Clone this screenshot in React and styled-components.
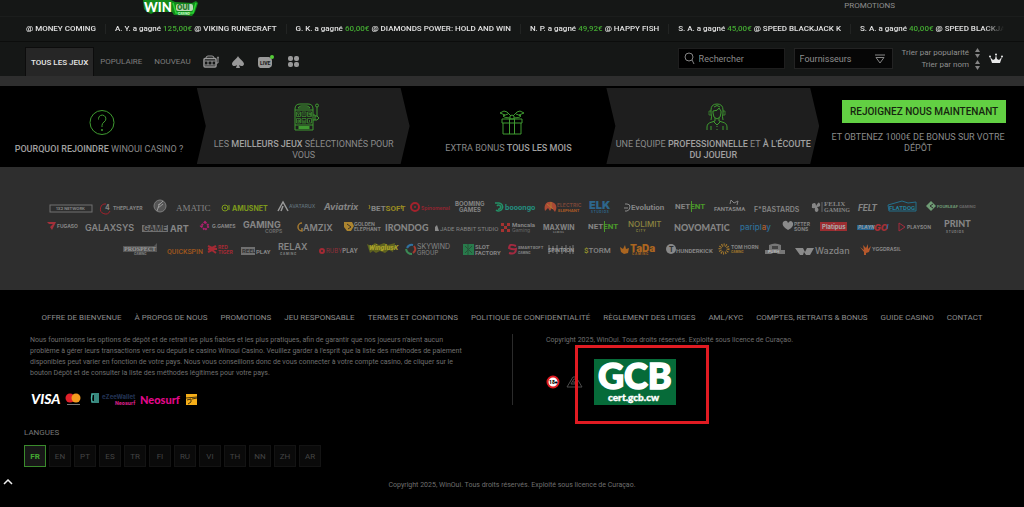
import React, { Fragment } from 'react'
import styled, { createGlobalStyle } from 'styled-components'

const GlobalStyle = createGlobalStyle`
  * {
    box-sizing: border-box;
  }

  body {
    margin: 0;
    background: #000;
    color: #8f8f8f;
    font-family: Roboto, 'Liberation Sans', sans-serif;
    font-size: 8px;
  }

  a {
    color: inherit;
    text-decoration: none;
  }

  button, input, select {
    font-family: inherit;
  }
`

const Header = styled.header`
  background: #151716;
`

const TopBar = styled.div`
  display: flex;
  justify-content: space-between;
  height: 17px;
  padding: 0 129px 0 142px;
  line-height: 12px;
  border-bottom: 1px solid #1b1d1c;
`

const Ticker = styled.div`
  display: flex;
  align-items: center;
  height: 24px;
  margin: 0 20px 0 17px;
  overflow: hidden;
  -webkit-mask-image: linear-gradient(90deg, transparent 0, #000 10px, #000 calc(100% - 20px), transparent 100%);
  mask-image: linear-gradient(90deg, transparent 0, #000 10px, #000 calc(100% - 20px), transparent 100%);
`

const Win = styled.span`
  flex: none;
  padding: 0 9px;
  color: #e2e2e2;
  font-size: 8px;
  font-weight: 500;
  line-height: 10px;
  white-space: nowrap;

  & + & {
    border-left: 1px solid #222423;
  }
`

const Amount = styled.span`
  color: #43a832;
`

const NavBar = styled.nav`
  display: flex;
  align-items: flex-end;
  height: 35px;
  padding: 0 21px 0 25px;
  border-top: 1px solid #0c0d0c;
`

const Tab = styled.a`
  display: flex;
  align-items: center;
  height: 29px;
  padding: 0 ${props => (props.$active ? '5px' : '6px')};
  color: ${props => (props.$active ? '#e8e8e8' : '#7d7d7d')};
  background: ${props => (props.$active ? '#262626' : 'transparent')};
  border: ${props => (props.$active ? '1px solid #0c0c0c' : '0')};
  border-bottom: 0;
  font-weight: ${props => (props.$active ? 500 : 400)};
`

const GameTypes = styled.div`
  display: flex;
  align-items: center;
  gap: 13px;
  height: 29px;
  padding-left: 6px;
`

const IconLink = styled.a`
  display: flex;
`

const Filters = styled.div`
  display: flex;
  align-items: center;
  gap: 9px;
  height: 35px;
  margin-left: auto;
`

const SearchBox = styled.label`
  display: flex;
  align-items: center;
  gap: 4px;
  width: 107px;
  height: 21px;
  padding: 0 5px;
  background: #000;
  border: 1px solid #1e1e1e;
`

const SearchInput = styled.input`
  width: 80px;
  padding: 0;
  color: #a5a5a5;
  background: transparent;
  border: 0;
  outline: 0;
  font-size: 9px;

  &::placeholder {
    color: #8a8a8a;
    opacity: 1;
  }
`

const SelectBox = styled.label`
  display: flex;
  align-items: center;
  width: 99px;
  height: 21px;
  padding: 0 7px 0 5px;
  background: #060606;
  border: 1px solid #232323;
`

const Select = styled.select`
  flex: 1;
  padding: 0;
  color: #8f8f8f;
  background: transparent;
  border: 0;
  appearance: none;
  font-size: 9px;
`

const SortList = styled.div`
  display: flex;
  flex-direction: column;
  align-items: flex-end;
  gap: 1px;
`

const SortButton = styled.button`
  display: flex;
  align-items: center;
  gap: 6px;
  height: 11px;
  padding: 0;
  color: #8f8f8f;
  background: none;
  border: 0;
  font-size: 8px;
  line-height: 11px;
`

const Strip = styled.div`
  height: 10px;
  background: #2e2e2e;
`

const Reasons = styled.section`
  display: grid;
  grid-template-columns: repeat(5, 1fr);
  padding: 2px 0 3px;
`

const Reason = styled.div`
  display: flex;
  flex-direction: column;
  align-items: center;
  justify-content: center;
  gap: 8px;
  height: 76px;
  margin-left: ${props => (props.$raised ? '-8px' : '0')};
  padding: 12px 0 0 ${props => (props.$raised ? '8px' : '0')};
  background: ${props => (props.$raised ? '#1e1e1e' : 'transparent')};
  clip-path: ${props => (props.$raised
    ? 'polygon(0 0, calc(100% - 9px) 0, 100% 50%, calc(100% - 9px) 100%, 0 100%, 9px 50%)'
    : 'none')};
`

const ReasonText = styled.p`
  margin: 0 7px 0 0;
  color: #8a8a8a;
  font-size: 9px;
  line-height: 11px;
  text-align: center;

  b {
    color: #a0a0a0;
    font-weight: 500;
  }
`

const Join = styled.div`
  display: flex;
  flex-direction: column;
  align-items: center;
  gap: 9px;
  padding: 12px 8px 0;
`

const JoinButton = styled.button`
  height: 23px;
  margin-left: 5px;
  padding: 0 8px;
  color: #16250f;
  background: #62d043;
  border: 0;
  font-size: 10px;
  font-weight: 500;
  white-space: nowrap;
`

const Providers = styled.section`
  display: flex;
  flex-direction: column;
  align-items: center;
  gap: 1px;
  padding: 31px 40px 30px;
  background: #2e2e2e;
`

const ProviderRow = styled.div`
  display: flex;
  flex-wrap: wrap;
  justify-content: center;
  gap: 9px;
  row-gap: 0;
`

const LogoSvg = styled.svg`
  display: block;
  flex: none;
  overflow: visible;
`

const Footer = styled.footer`
  padding: 22px 24px 14px;
`

const FooterLinks = styled.nav`
  display: flex;
  flex-wrap: wrap;
  justify-content: center;
  gap: 13px;
  color: #8c8c8c;
  font-size: 8px;
  line-height: 12px;
`

const Columns = styled.div`
  display: grid;
  grid-template-columns: 1fr 1fr;
  margin-top: 10px;
`

const Column = styled.div`
  padding: 1px 40px 0 ${props => (props.$divided ? '33px' : '6px')};
  border-left: ${props => (props.$divided ? '1px solid #2b2b2b' : '0')};
`

const Copy = styled.p`
  margin: 0;
  color: #6f6f6f;
  font-size: 7px;
  line-height: 11px;
  text-align: ${props => (props.$center ? 'center' : 'left')};
`

const Payments = styled.div`
  display: flex;
  align-items: center;
  margin-top: 14px;
`

const Badges = styled.div`
  display: flex;
  align-items: center;
  gap: 6px;
  margin-top: 13px;
`

const BadgeSvg = styled.svg`
  display: block;
  overflow: visible;
`

const Certificate = styled.a`
  position: relative;
  display: block;
  margin-left: 6px;

  &::after {
    content: '';
    position: absolute;
    inset: -14px -33px -19px -19px;
    border: 3px solid #e01b22;
  }
`

const Languages = styled.div`
  display: flex;
  flex-wrap: wrap;
  gap: 3px;
  margin: 6px 0 13px;
`

const LanguagesTitle = styled.h4`
  margin: 22px 0 0;
  color: #777;
  font-size: 8px;
  font-weight: 400;
  line-height: 12px;
`

const Language = styled.button`
  width: 22px;
  height: 22px;
  padding: 0;
  color: ${props => (props.$active ? '#43a832' : '#444')};
  background: ${props => (props.$active ? '#171717' : '#0a0a0a')};
  border: 1px solid ${props => (props.$active ? '#3a8a2c' : '#131313')};
  font-size: 8px;
  font-weight: ${props => (props.$active ? 700 : 400)};
`

const ToTop = styled.button`
  position: fixed;
  bottom: 21px;
  left: 2px;
  display: flex;
  padding: 1px;
  background: none;
  border: 0;
`

const wins = [
  ['A. Y.', '125,00€', 'VIKING RUNECRAFT'],
  ['G. K.', '60,00€', 'DIAMONDS POWER: HOLD AND WIN'],
  ['N. P.', '49,92€', 'HAPPY FISH'],
  ['S. A.', '45,00€', 'SPEED BLACKJACK K'],
  ['S. A.', '40,00€', 'SPEED BLACKJACK K']
]

const footerLinks = [
  'OFFRE DE BIENVENUE',
  'À PROPOS DE NOUS',
  'PROMOTIONS',
  'JEU RESPONSABLE',
  'TERMES ET CONDITIONS',
  'POLITIQUE DE CONFIDENTIALITÉ',
  'RÈGLEMENT DES LITIGES',
  'AML/KYC',
  'COMPTES, RETRAITS & BONUS',
  'GUIDE CASINO',
  'CONTACT'
]

const languages = ['FR', 'EN', 'PT', 'ES', 'TR', 'FI', 'RU', 'VI', 'TH', 'NN', 'ZH', 'AR']

// one line of lettering inside a logo
const T = ({ x = 0, y = 13, s = 8, c = '#858585', f = 'Inter, sans-serif', w = 700, children }) => (
  <text x={x} y={y} fontSize={s} fill={c} fontFamily={f} fontWeight={w}>{children}</text>
)

const serif = 'Liberation Serif, serif'
const lato = 'Lato, sans-serif'
const roboto = 'Roboto, sans-serif'

const providerRows = [
  [
    [44, <Fragment><rect x='1' y='7' width='42' height='7' fill='none' stroke='#707070' /><T x={7} y={12} s={4}>1X2 NETWORK</T></Fragment>],
    [42, <Fragment><path d='M4 6A5 5 0 1 0 8 13' fill='none' stroke='#a3222c' /><T x={3} y={12} s={7}>4</T><T x={11} y={12} s={5}>THEPLAYER</T></Fragment>],
    [14, <Fragment><circle cx='7' cy='8' r='6' fill='#555' stroke='#7d7d7d' /><path d='M4 13Q5 6 10 3M5 10L10 6M5 7L8 5' stroke='#999' fill='none' /></Fragment>],
    [36, <T y={13} s={9} f={serif} w={400}>AMATIC</T>],
    [48, <Fragment><circle cx='4' cy='10' r='3' fill='none' stroke='#7d9a1c' /><circle cx='4' cy='10' r='1' fill='#7d9a1c' /><path d='M8 7V12' stroke='#7d9a1c' /><T x={11} y={13} s={7} c='#7d9a1c'>AMUSNET</T></Fragment>],
    [37, <Fragment><path d='M0 13L5 4L10 13M3 13L5 8' fill='none' stroke='#9a9a9a' strokeWidth='1.5' /><T x={11} y={10} s={5} c='#60707a' w={500}>AVATARUX</T></Fragment>],
    [36, <g fontStyle='italic'><T y={12} s={9}>Aviatrix</T></g>],
    [32, <Fragment><path d='M0 7L1 9L0 11M33 7L32 9L33 11' stroke='#9a8b22' fill='none' /><T x={2} y={13} s={8} f={roboto}>BET<tspan fill='#9a8b22'>SOFT</tspan></T></Fragment>],
    [36, <Fragment><circle cx='5' cy='9' r='4' fill='none' stroke='#a3222c' strokeWidth='2' /><circle cx='5' cy='9' r='1' fill='#a3222c' /><T x={11} y={12} s={5} c='#8d2530'>Spinomenal</T></Fragment>],
    [30, <Fragment><T y={8} s={6}>BOOMING</T><T x={4} y={14} s={6}>GAMES</T></Fragment>],
    [41, <Fragment><path d='M1 5H5A4 4 0 1 1 2 12M3 8A2 2 0 1 1 4 11' fill='none' stroke='#239066' strokeWidth='1.5' /><T x={11} y={12} s={7} c='#239080'>booongo</T></Fragment>],
    [36, <Fragment><path d='M1 13C-1 5 5 2 10 5C13 7 13 11 11 14L8 10L6 13L4 10Z' fill='#ab4a35' /><path d='M3 6L9 11M7 4V10' stroke='#b07830' /><T x={13} y={9} s={5} c='#7a4638'>ELECTRIC</T><T x={14} y={14} s={4} c='#ab5a25'>ELEPHANT</T></Fragment>],
    [26, <Fragment><T y={11} s={11} c='#2d668c' w={900}>ELK</T><T x={2} y={15} s={3} c='#2d668c'>S T U D I O S</T></Fragment>],
    [42, <Fragment><path d='M1 6H3Q6 6 6 9T3 13H1M0 10H4' fill='none' stroke='#8a8a8a' /><T x={7} y={12} s={8} f={roboto}>Evolution</T></Fragment>],
    [30, <Fragment><path d='M16.500 3V14' stroke='#4a9a2a' /><T y={11} s={8} f={roboto}>NET<tspan fill='#4a9a2a'>ENT</tspan></T></Fragment>],
    [31, <Fragment><path d='M16 6L17 2L20 5L24 3L23 7' fill='none' stroke='#858585' /><T y={13} s={6} f={roboto}>FANTASMA</T></Fragment>],
    [48, <T y={14} s={7} w={600}>F*BASTARDS</T>],
    [38, <Fragment><path d='M1 6Q5 3 5 8Q8 2 9 6Q10 9 6 9Q9 12 6 14Q3 14 4 10Q0 11 1 8Z' fill='#858585' /><path d='M11 4V14' stroke='#666' /><T x={13} y={8} s={7} f={serif}>FELIX</T><T x={13} y={14} s={6} f={serif}>GAMING</T></Fragment>],
    [21, <g fontStyle='italic'><T y={13} s={9} f={roboto}>FELT</T></g>],
    [29, <Fragment><path d='M0 7L14 3L20 5L28 4V13H1Z' fill='none' stroke='#23708c' /><T x={1} y={12} s={6} c='#23809c' f={roboto}>FLATDOG</T></Fragment>],
    [49, <Fragment><path d='M5 3L10 8L5 13L0 8Z' fill='#6f9c75' /><path d='M7 6L4 8L7 10' stroke='#2e2e2e' fill='none' /><T x={11} y={10} s={4} c='#6f9c75'>FOURLEAF <tspan fill='#686868'>GAMING</tspan></T></Fragment>]
  ],
  [
    [29, <Fragment><path d='M0 3H9L5 11L3 8L6 5H2Z' fill='#a3303a' /><T x={10} y={9} s={5}>FUGASO</T></Fragment>],
    [48, <T y={12} s={9} w={600}>GALAXSYS</T>],
    [49, <Fragment><rect y='6' width='26' height='7' fill='#707070' /><T x={1} y={12} s={8} c='#333'>GAME</T><T x={28} y={13} s={9}>ART</T></Fragment>],
    [34, <Fragment><path d='M5 3L9 7L5 11L1 7Z' fill='none' stroke='#b02070' strokeWidth='2' strokeDasharray='2 1' /><T x={12} y={9} s={5}>G.GAMES</T></Fragment>],
    [43, <Fragment><T y={9} s={9}>GAMING</T><T x={22} y={14} s={5} c='#686868'>CORPS</T></Fragment>],
    [40, <Fragment><path d='M7 4A4 4 0 1 0 7 12V9' fill='none' stroke='#a37830' strokeWidth='1.5' /><T x={8} y={12} s={9} w={600}>AMZIX</T></Fragment>],
    [32, <Fragment><path d='M0 3H8L10 7L7 12H3L0 8Z' fill='#ab842f' /><path d='M3 5L7 8L4 10' stroke='#3b3328' fill='none' /><T x={10} y={7} s={5}>GOLDEN</T><T x={10} y={12} s={5}>ELEPHANT</T></Fragment>],
    [41, <T y={12} s={9} f={lato} w={900}>IRONDOG</T>],
    [56, <Fragment><path d='M0 12V8L2 6L4 12Z' fill='#8a8a8a' /><T x={5} y={12} s={6} f={roboto} w={400}>JADE RABBIT STUDIO</T></Fragment>],
    [34, <Fragment><path d='M1 4H4V7H7V4H10V7H7V10H10V13H7V10H4V13H1V10H4V7H1Z' fill='#a53230' /><T x={12} y={8} s={6} f={roboto}>Mancala</T><T x={12} y={13} s={5} c='#686868' w={400}>Gaming</T></Fragment>],
    [36, <Fragment><T y={11} s={7}>MAXWIN</T><T x={10} y={14} s={2}>G A M I N G</T></Fragment>],
    [31, <Fragment><path d='M16.500 2V13' stroke='#4a9a2a' /><T y={10} s={8} f={roboto}>NET<tspan fill='#4a9a2a'>ENT</tspan></T></Fragment>],
    [37, <Fragment><T y={8} s={8} c='#8c8540' w={500}>NOLIMIT</T><T x={8} y={13} s={3} c='#8c8540'>C  I  T  Y</T></Fragment>],
    [57, <T y={12} s={9} f={lato} w={900}>NOVOMATIC</T>],
    [33, <T y={11} s={8} c='#2e6e98' w={500}>paripl<tspan fill='#b06030'>a</tspan>y</T>],
    [28, <Fragment><path d='M1 3Q5 0 6 4Q9 0 11 4Q12 8 6 11Q-1 7 1 3Z' fill='#8a8a8a' /><T x={12} y={7} s={5}>PETER</T><T x={12} y={12} s={5}>SONS</T></Fragment>],
    [29, <Fragment><rect x='1' y='3' width='27' height='9' fill='#9d2d31' /><T x={3} y={10} s={6} c='#aaa'>Platipus</T></Fragment>],
    [32, <g fontStyle='italic'><rect y='6' width='17' height='5' fill='#25628f' /><T x={1} y={10} s={5} c='#999'>PLAYN</T><T x={17} y={12} s={9} c='#a32f36' w={900}>GO</T><path d='M31 5L30 10' stroke='#286fa5' /></g>],
    [37, <Fragment><path d='M1 4L7 8L1 12Z' fill='none' stroke='#a32a3d' /><T x={9} y={10} s={5}>PLAYSON</T></Fragment>],
    [34, <Fragment><T y={8} s={9} f={lato} w={900}>PRINT</T><T x={2} y={14} s={3}>S T U D I O S</T></Fragment>]
  ],
  [
    [35, <Fragment><path d='M0 6H31L34 3V12H0Z' fill='#555' /><T x={1} y={11} s={6} c='#999' f={serif}>PROSPECT</T><T x={11} y={15} s={3}>GAMING</T></Fragment>],
    [32, <T y={14} s={7} f={roboto} c='#a0571d' w={500}>QUICKSPIN</T>],
    [24, <Fragment><path d='M0 6L4 8L8 6M0 9H9M0 12L4 10L8 13' stroke='#a32a34' strokeWidth='2' fill='none' /><T x={10} y={9} s={5} c='#a32a34'>RED</T><T x={10} y={14} s={5} c='#a32a34'>TIGER</T></Fragment>],
    [28, <Fragment><rect y='7' width='14' height='8' fill='#707070' /><T x={1} y={13} s={6} c='#333' f={roboto}>REEL</T><T x={15} y={14} s={6} f={roboto}>PLAY</T></Fragment>],
    [32, <Fragment><T y={10} s={9} w={600}>RELAX</T><T x={2} y={15} s={3}>G A M I N G</T></Fragment>],
    [39, <Fragment><circle cx='3' cy='11' r='2' fill='none' stroke='#a32a34' strokeWidth='2' /><T x={7} y={13} s={6} c='#93303a' w={400}>RUBY<tspan fill='#858585' fontWeight='700'>PLAY</tspan></T></Fragment>],
    [29, <Fragment><path d='M0 4L4 6L8 3L12 5L17 3L21 5L28 3L26 12L22 10L18 13L13 11L9 13L6 11L3 13Z' fill='#5f621f' /><g fontStyle='italic'><T x={2} y={10} s={7} c='#a8a02a' f={roboto} w={900}>WinglusK</T></g></Fragment>],
    [49, <Fragment><path d='M2 8Q4 4 8 5' stroke='#3071a0' strokeWidth='2' fill='none' /><path d='M9 6Q12 10 8 13' stroke='#a33b30' strokeWidth='2' fill='none' /><path d='M1 9Q2 14 7 14' stroke='#3b8a55' strokeWidth='2' fill='none' /><T x={12} y={9} s={7} w={400}>SKYWIND</T><T x={12} y={15} s={6} w={400}>GROUP</T></Fragment>],
    [36, <Fragment><rect y='4' width='11' height='11' fill='#287a4b' /><path d='M2 6L9 13M9 6L2 13M5 4V15' stroke='#265238' /><T x={12} y={9} s={6} f={roboto}>SLOT</T><T x={12} y={15} s={6} f={roboto}>FACTORY</T></Fragment>],
    [31, <Fragment><path d='M8 6Q1 3 1 8Q5 10 8 9Q8 15 1 13' fill='none' stroke='#a32a40' strokeWidth='2' /><T x={10} y={9} s={4}>SMARTSOFT</T><T x={10} y={14} s={3}>GAMING</T></Fragment>],
    [27, <Fragment><path d='M1 5V14M5 6V13M9 5V14M14 6V14M18 5V13M22 6V14M25 5V14' stroke='#555' strokeWidth='2' /><T x={0} y={12} s={5} c='#999'>SPINTRON</T></Fragment>],
    [27, <T y={13} s={8} f={roboto} w={500}><tspan fill='#99962d'>$</tspan>TORM</T>],
    [37, <Fragment><path d='M0 7L3 9L5 5L6 9L9 8L8 13L4 14L1 12Z' fill='#aa6520' /><T x={10} y={12} s={10} c='#aa6520' w={900}>TaDa</T><T x={12} y={15} s={3} c='#aa6520'>G A M I N G</T></Fragment>],
    [44, <Fragment><circle cx='5' cy='9' r='5' fill='#888' /><T x={3} y={12} s={7} c='#2e2e2e'>T</T><T x={10} y={13} s={6} f={roboto}>HUNDERKICK</T></Fragment>],
    [36, <Fragment><circle cx='5' cy='9' r='4' fill='none' stroke='#a3782c' strokeDasharray='1 1' strokeWidth='3' /><T x={12} y={9} s={5}>TOM HORN</T><T x={12} y={13} s={3} c='#a3782c'>GAMING</T></Fragment>],
    [22, <Fragment><path d='M5 10V5Q11 2 17 5V10H21V14H14L11 12L7 14H1V10Z' fill='#777' /><path d='M8 6H14V9H8Z' fill='#444' /><T x={4} y={13} s={4} c='#bbb'>PUSH</T></Fragment>],
    [56, <Fragment><path d='M0 8H8L10 12L12 8H19L15 15H11L9 12L8 15H5Z' fill='#8a8a8a' /><T x={20} y={14} s={9} w={500}>Wazdan</T></Fragment>],
    [41, <Fragment><path d='M0 7L4 10L3 5L6 8L8 4V9L11 6L9 12L6 13V15H4V12Z' fill='#b5582c' /><T x={12} y={11} s={5}>YGGDRASIL</T></Fragment>]
  ]
]

const SiteLogo = () => (
  <BadgeSvg width='58' height='17' viewBox='0 0 58 17' role='img' aria-label='WinOui Casino'>
    <path d='M1 0L2 9L5 12L9 14L13 12L30 12L32 15L50 16L53 12L56 3L54 1L50 3L33 2L29 0Z' fill='#138a1c' />
    <path d='M31 3L34 13H51L54 3' fill='none' stroke='#2bd434' strokeWidth='1.5' />
    <rect x='34' y='4' width='17' height='7' rx='2' fill='#b9d9b5' />
    <T x={2} y={12} s={13} c='#fff' f={lato} w={900}>WIN</T>
    <T x={35} y={10} s={7} c='#287a2c' w={900}>OUI</T>
    <T x={36} y={15} s={3} c='#d6f5d4'>CASINO</T>
  </BadgeSvg>
)

const QuestionIcon = () => (
  <svg width='27' height='27' viewBox='0 0 27 27' fill='none' stroke='#3f9a30'>
    <circle cx='13' cy='13.5' r='12' />
    <path d='M9.500 10.500V9.500A3.700 3.700 0 1 1 15 13Q13 14.500 13 16.500V18' />
    <circle cx='13' cy='21' r='.6' fill='#3f9a30' />
  </svg>
)

const SlotIcon = () => (
  <svg width='26' height='28' viewBox='0 0 26 28' fill='none' stroke='#3f9a30'>
    <path d='M1 27V6Q1 1 6 1H14Q19 1 19 6V27ZM1 22H19M1 7H19M4 5Q5 3 7 3H13Q15 3 16 5Z' />
    <path d='M2.500 9H6.500V13.500H2.500ZM8 9H12V13.500H8ZM13.500 9H17.500V13.500H13.500ZM2.500 15.500H6.500V20H2.500ZM8 15.500H12V20H8ZM13.500 15.500H17.500V20H13.500Z' strokeWidth='.7' />
    <path d='M3.500 10L4.500 12.500L5.500 10M10 10V12.500M15 12.500V10L16.500 12.500V10M4 17H5.500V19H4ZM9 17V19H11V17M15.500 17V19' strokeWidth='.7' />
    <rect x='5' y='23.500' width='10' height='2' fill='#3f9a30' />
    <path d='M19 12H21V17H19M21 13H23L25 15L23 17H21M23 13V4' />
    <circle cx='23' cy='2.500' r='1.500' />
  </svg>
)

const GiftIcon = () => (
  <svg width='26' height='25' viewBox='0 0 26 25' fill='none' stroke='#3f9a30'>
    <path d='M3 9H23V13H3ZM4 13V24H22V13M10.500 9V24M15.500 9V24' />
    <path d='M11 8Q5 8 4 6L6 5L1 3L5 1L8 2L12 6M15 8Q21 8 22 6L20 5L25 3L21 1L18 2L14 6M11 6Q13 4 15 6V9H11ZM4 6L9 4M22 6L17 4' />
  </svg>
)

const SupportIcon = () => (
  <svg width='22' height='28' viewBox='0 0 22 28' fill='none' stroke='#3f9a30'>
    <path d='M5 17Q6 14 5 10V7Q5 1 11 1T17 7V10Q16 14 17 17M7 10Q7 15 11 16Q15 15 15 10M7 10V8Q12 8 13 5L15 8V10M8 4Q11 1 14 4' />
    <path d='M9 15V18L6 19Q1 20 1 24V27M13 15V18L16 19Q21 20 21 24V27M7 18L11 22L15 18M5 23V27M17 23V27M11 23V24M11 26V27' />
    <path d='M5 8H3V12H5M17 8H19V12H17' strokeWidth='.7' />
  </svg>
)

const SortArrows = () => (
  <svg width='5' height='10' viewBox='0 0 5 10' fill='#858585'>
    <path d='M2.500 0L5 4H0ZM0 6H5L2.500 10Z' />
  </svg>
)

const App = () => (
  <Fragment>
    <GlobalStyle />
    <Header>
      <TopBar>
        <a href='#home'><SiteLogo /></a>
        <a href='#promotions'>PROMOTIONS</a>
      </TopBar>
      <Ticker>
        <Win>@ MONEY COMING</Win>
        {wins.map(([player, amount, game], index) => (
          <Win key={index}>{player} a gagné <Amount>{amount}</Amount> @ {game}</Win>
        ))}
      </Ticker>
      <NavBar>
        <Tab href='#all' $active>TOUS LES JEUX</Tab>
        <Tab href='#popular'>POPULAIRE</Tab>
        <Tab href='#new'>NOUVEAU</Tab>
        <GameTypes>
          <IconLink href='#slots' aria-label='Machines à sous'>
            <svg width='16' height='13' viewBox='0 0 16 13' fill='none' stroke='#999'>
              <path d='M3 3Q3 1 5 1H9Q11 1 11 3' />
              <rect x='1' y='3.500' width='12' height='8.500' rx='1' strokeWidth='1.500' />
              <path d='M2 6H12M2 10H12M5 6V10M9 6V10M13 8H15V3' />
              <circle cx='15' cy='2.500' r='.6' />
            </svg>
          </IconLink>
          <IconLink href='#cards' aria-label='Jeux de cartes'>
            <svg width='12' height='12' viewBox='0 0 12 12' fill='#999'>
              <path d='M6 0C7 3 12 5 12 8C12 10 9 11 7 9L8 12H4L5 9C3 11 0 10 0 8C0 5 5 3 6 0Z' />
            </svg>
          </IconLink>
          <IconLink href='#live' aria-label='Casino live'>
            <svg width='18' height='16' viewBox='0 0 18 16'>
              <path d='M3 3H12Q15 4 15 7V11Q15 13 12 14H3Q1 13 1 11V5Q1 3 3 3Z' fill='#999' />
              <T x={3} y={11} s={5} c='#222' f={roboto} w={900}>LIVE</T>
              <circle cx='15' cy='3' r='2' fill='#55cc38' />
            </svg>
          </IconLink>
          <IconLink href='#others' aria-label='Autres jeux'>
            <svg width='12' height='12' viewBox='0 0 12 12' fill='#999'>
              <rect width='5' height='5' rx='2' />
              <rect x='6' width='5' height='5' rx='2' />
              <rect y='6' width='5' height='5' rx='2' />
              <rect x='6' y='6' width='5' height='5' rx='2' />
            </svg>
          </IconLink>
        </GameTypes>
        <Filters>
          <SearchBox>
            <svg width='11' height='13' viewBox='0 0 11 13' fill='none' stroke='#858585'>
              <circle cx='5' cy='5' r='4' />
              <path d='M8 8L10 12' />
            </svg>
            <SearchInput placeholder='Rechercher' aria-label='Rechercher' />
          </SearchBox>
          <SelectBox>
            <Select aria-label='Fournisseurs'>
              <option>Fournisseurs</option>
            </Select>
            <svg width='10' height='10' viewBox='0 0 10 10' fill='none' stroke='#858585'>
              <path d='M0 1H10M1 3.500H9L5 9Z' />
            </svg>
          </SelectBox>
          <SortList>
            <SortButton>Trier par popularité<SortArrows /></SortButton>
            <SortButton>Trier par nom<SortArrows /></SortButton>
          </SortList>
          <IconLink href='#vip' aria-label='VIP'>
            <svg width='14' height='11' viewBox='0 0 14 11' fill='#e8e8e8'>
              <path d='M1 4L4 7L6 6L7 2L8 6L10 7L13 4L11 10H3Z' />
              <circle cx='1' cy='3.500' r='1' />
              <circle cx='7' cy='1.500' r='1' />
              <circle cx='13' cy='3.500' r='1' />
            </svg>
          </IconLink>
        </Filters>
      </NavBar>
    </Header>
    <Strip />
    <Reasons>
      <Reason>
        <QuestionIcon />
        <ReasonText><b>POURQUOI REJOINDRE</b> WINOUI CASINO ?</ReasonText>
      </Reason>
      <Reason $raised>
        <SlotIcon />
        <ReasonText>LES <b>MEILLEURS JEUX</b> SÉLECTIONNÉS POUR VOUS</ReasonText>
      </Reason>
      <Reason>
        <GiftIcon />
        <ReasonText>EXTRA BONUS <b>TOUS LES MOIS</b></ReasonText>
      </Reason>
      <Reason $raised>
        <SupportIcon />
        <ReasonText>UNE ÉQUIPE <b>PROFESSIONNELLE</b> ET <b>À L'ÉCOUTE DU JOUEUR</b></ReasonText>
      </Reason>
      <Join>
        <JoinButton>REJOIGNEZ NOUS MAINTENANT</JoinButton>
        <ReasonText>ET OBTENEZ 1000€ DE BONUS SUR VOTRE DÉPÔT</ReasonText>
      </Join>
    </Reasons>
    <Providers>
      {providerRows.map((row, rowIndex) => (
        <ProviderRow key={rowIndex}>
          {row.map(([width, art], index) => (
            <LogoSvg key={index} width={width} height='20' viewBox={`0 0 ${width} 20`}>{art}</LogoSvg>
          ))}
        </ProviderRow>
      ))}
    </Providers>
    <Footer>
      <FooterLinks>
        {footerLinks.map(link => <a key={link} href='#page'>{link}</a>)}
      </FooterLinks>
      <Columns>
        <Column>
          <Copy>
            Nous fournissons les options de dépôt et de retrait les plus fiables et les plus pratiques, afin de garantir que nos joueurs n'aient aucun problème à gérer leurs transactions vers ou depuis le casino Winoui Casino. Veuillez garder à l'esprit que la liste des méthodes de paiement disponibles peut varier en fonction de votre pays. Nous vous conseillons donc de vous connecter à votre compte casino, de cliquer sur le bouton Dépôt et de consulter la liste des méthodes légitimes pour votre pays.
          </Copy>
          <Payments>
            <BadgeSvg width='170' height='12' viewBox='0 0 170 12' role='img' aria-label='Moyens de paiement'>
              <g fontStyle='italic'><T x={1} y={11} s={14} c='#fff' f={lato} w={900}>VISA</T></g>
              <circle cx='40' cy='5' r='4.500' fill='#e0202a' />
              <circle cx='46' cy='5' r='4.500' fill='#f39a1e' />
              <path d='M37 11.500H50' stroke='#777' />
              <path d='M69 1H62Q61 6 62 9H69M64 3H69M64 5H69M64 7H69' fill='none' stroke='#4bb5a8' strokeWidth='1.500' />
              <T x={72} y={6} s={6} c='#20304f' w={800}>eZeeWallet</T>
              <T x={85} y={12} s={5} c='#cf1f82' w={800}>Neosurf</T>
              <T x={110} y={11} s={11} c='#e3078b' f={lato} w={900}>Neosurf</T>
              <rect x='156' y='1' width='11' height='11' fill='#f5ae18' />
              <path d='M156 5L167 4M157 7L161 6V9L158 11M162 6L167 5' stroke='#46340d' fill='none' />
            </BadgeSvg>
          </Payments>
        </Column>
        <Column $divided>
          <Copy>Copyright 2025, WinOui. Tous droits réservés. Exploité sous licence de Curaçao.</Copy>
          <Badges>
            <BadgeSvg width='14' height='14' viewBox='0 0 14 14' role='img' aria-label='18+'>
              <circle cx='7' cy='7' r='5.500' fill='#fff' stroke='#e01b22' strokeWidth='2' />
              <T x={3} y={9} s={5} c='#000' f={roboto} w={900}>18+</T>
            </BadgeSvg>
            <BadgeSvg width='16' height='12' viewBox='0 0 16 12' fill='none' stroke='#4c4c4c' role='img' aria-label='Gambling Therapy'>
              <path d='M11 1H7L1 11H16L10 1M10 3H8L5 8H9V6H7' />
            </BadgeSvg>
            <Certificate href='#gcb'>
              <BadgeSvg width='82' height='46' viewBox='0 0 82 46'>
                <rect width='82' height='46' fill='#066b39' />
                <g stroke='#fff' strokeWidth='1.500'>
                  <T x={4} y={30} s={36} c='#fff' f={lato} w={900}>GCB</T>
                </g>
                <g stroke='#fff' strokeWidth='.4'>
                  <T x={14} y={42} s={10} c='#fff' f={lato} w={900}>cert.gcb.cw</T>
                </g>
              </BadgeSvg>
            </Certificate>
          </Badges>
        </Column>
      </Columns>
      <LanguagesTitle>LANGUES</LanguagesTitle>
      <Languages>
        {languages.map((code, index) => (
          <Language key={code} $active={index === 0}>{code}</Language>
        ))}
      </Languages>
      <Copy $center>Copyright 2025, WinOui. Tous droits réservés. Exploité sous licence de Curaçao.</Copy>
    </Footer>
    <ToTop aria-label='Haut de page'>
      <svg width='10' height='6' viewBox='0 0 10 6' fill='none' stroke='#eee' strokeWidth='1.500'>
        <path d='M1 5L5 1L9 5' />
      </svg>
    </ToTop>
  </Fragment>
)

export default App
